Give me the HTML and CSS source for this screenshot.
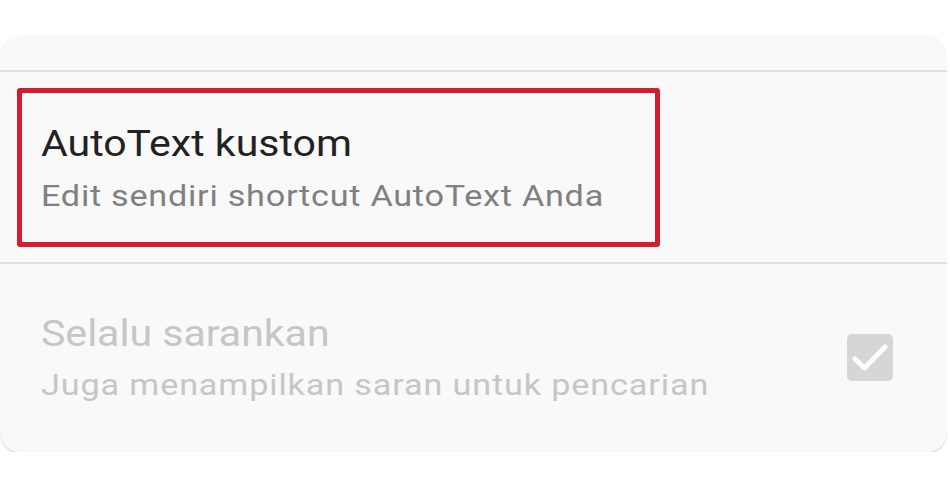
FILE: index.html
```html
<!DOCTYPE html>
<html lang="id">
<head>
    <meta charset="UTF-8">
    <meta name="viewport" content="width=device-width, initial-scale=1.0">
    <title>Pengaturan AutoText</title>
    <link rel="stylesheet" href="styles.css">
</head>
<body>
    <div class="card">
        <div class="card-head"></div>

        <div class="item custom">
            <div class="highlight">
                <div class="text">
                    <div class="title">AutoText kustom</div>
                    <div class="summary">Edit sendiri shortcut AutoText Anda</div>
                </div>
            </div>
        </div>

        <div class="item disabled">
            <div class="text">
                <div class="title">Selalu sarankan</div>
                <div class="summary">Juga menampilkan saran untuk pencarian</div>
            </div>
            <div class="checkbox">
                <svg width="46" height="47" viewBox="0 0 46 47">
                    <path d="M8 25 L17.5 34 L38 13" fill="none" stroke="#fff" stroke-width="5" stroke-linecap="round" stroke-linejoin="round"/>
                </svg>
            </div>
        </div>
    </div>
</body>
</html>
```

FILE: styles.css
```css
body { margin: 0; background: #fff; font-family: Roboto, "Noto Sans", Arial, sans-serif; }
.card { margin-top: 35px; width: 947px; background: #f9f9f9; border-radius: 20px; box-shadow: 0 2px 1px #e2e2e2; }
.card-head { height: 35px; border-bottom: 2px solid #e0e0e0; }
.item { display: flex; align-items: center; }
.item + .item { border-top: 2px solid #e0e0e0; }
.custom { padding: 16px 0 15px 17px; }
.highlight { width: 643px; box-sizing: border-box; border: 5px solid #d01d30; border-radius: 3px; padding: 29px 0 26px 19px; }
.text { transform: scaleX(1.14); transform-origin: left center; }
.title { font-size: 36px; line-height: 44px; color: #222; }
.summary { font-size: 30px; line-height: 40px; margin-top: 10px; color: #808080; letter-spacing: 0.65px; }
.disabled { padding: 48px 54px 47px 41px; justify-content: space-between; }
.disabled .title { color: #c6c6c6; }
.disabled .summary { color: #c6c6c6; margin-top: 9px; letter-spacing: 0.75px; }
.checkbox { width: 46px; height: 47px; background: #d6d6d6; border-radius: 5px; margin-top: -3px; }
.checkbox svg { display: block; }
```
